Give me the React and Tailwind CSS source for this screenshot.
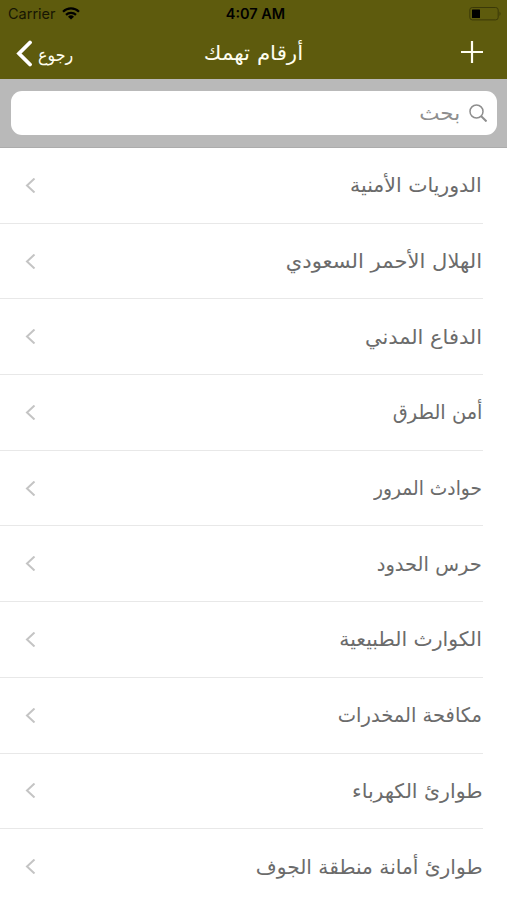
import React from 'react';

const contacts = [
  { name: 'الدوريات الأمنية', fit: 'scale-x-[1.023]' },
  { name: 'الهلال الأحمر السعودي', fit: 'scale-x-[1.055]' },
  { name: 'الدفاع المدني', fit: 'scale-x-[1.045]' },
  { name: 'أمن الطرق', fit: 'scale-x-[0.97]' },
  { name: 'حوادث المرور', fit: 'scale-x-[0.93]' },
  { name: 'حرس الحدود', fit: 'scale-x-[0.975]' },
  { name: 'الكوارث الطبيعية', fit: 'scale-x-[1.02]' },
  { name: 'مكافحة المخدرات', fit: 'scale-x-[0.975]' },
  { name: 'طوارئ الكهرباء', fit: 'scale-x-[1.023]' },
  { name: 'طوارئ أمانة منطقة الجوف', fit: 'scale-x-[1.01]' },
];

const StatusBar = () => (
  <div className="h-[27px] flex items-center justify-between px-2 text-[14.5px] text-black font-['Inter',sans-serif]">
    <div className="flex items-center gap-1.5 w-24 text-[#171603]">
      <span>Carrier</span>
      <svg width="18" height="13" viewBox="0 0 18 13" fill="none" stroke="black" strokeWidth="2.2">
        <path d="M1 4.7a11.5 11.5 0 0 1 16 0" />
        <path d="M4 7.9a7.2 7.2 0 0 1 10 0" />
        <path d="M9 12.5 6 9.7a4.3 4.3 0 0 1 6 0z" fill="black" stroke="none" />
      </svg>
    </div>
    <span className="font-semibold">4:07 AM</span>
    <div className="flex items-center justify-end w-24 -mr-1">
      <svg width="34" height="14" viewBox="0 0 34 14" fill="none">
        <rect x="0.8" y="0.5" width="28.4" height="12.4" rx="2.5" stroke="#3b3908" />
        <rect x="3" y="2.5" width="8" height="8.5" rx="0.5" fill="currentColor" />
        <path d="M30.5 4.5a3 3 0 0 1 0 4.500z" fill="#3b3908" />
      </svg>
    </div>
  </div>
);

const App = () => (
  <div dir="ltr" className="w-[507px] h-[900px] overflow-hidden bg-white font-['DejaVu_Sans',sans-serif]">
    <div className="h-[79px] bg-[#5e5b0d]">
      <StatusBar />
      <div className="h-[52px] grid grid-cols-3 items-center text-[#fffef0] text-xl">
        <div className="flex items-center gap-1.5 pl-4">
          <svg width="16" height="27" viewBox="0 0 16 27" fill="none" stroke="white" strokeWidth="3.8" strokeLinecap="round">
            <path d="M14 2.500 3 13.500 14 24.500" />
          </svg>
          <span dir="rtl" className="pt-1 text-[18px] origin-left scale-x-[0.88]">رجوع</span>
        </div>
        <span dir="rtl" className="text-center scale-x-[1.07]">أرقام تهمك</span>
        <div className="flex justify-end pr-6 -mt-0.5">
          <svg width="22" height="22" viewBox="0 0 22 22" stroke="currentColor" strokeWidth="2.2">
            <path d="M11 0v22M0 11h22" />
          </svg>
        </div>
      </div>
    </div>

    <div className="h-[69px] bg-[#b9b9b9] border-b border-[#acacac] pt-3 pl-[11px] pr-2.5">
      <div dir="rtl" className="h-11 bg-white rounded-[11px] flex items-center gap-[9px] px-2.5 text-xl text-[#8e8e8e]">
        <svg width="18" height="18" viewBox="0 0 18 18" fill="none" stroke="currentColor" strokeWidth="1.5">
          <circle cx="7.5" cy="7.5" r="6.5" />
          <path d="m12 12 5.5 5.5" strokeWidth="2" />
        </svg>
        <span className="origin-right scale-x-[1.07]">بحث</span>
      </div>
    </div>

    {contacts.map(({ name, fit }) => (
      <div key={name} className="h-[75.7px] mr-6 pl-[25px] pr-px flex items-center justify-between border-b border-[#e8e8e8] text-xl text-[#6b6b6b]">
        <svg width="11" height="15" viewBox="0 0 11 15" fill="none" stroke="#c4c4c4" strokeWidth="2">
          <path d="M9.5 .5 2 7.5l7.5 7" />
        </svg>
        <span dir="rtl" className={`origin-right ${fit}`}>{name}</span>
      </div>
    ))}
  </div>
);

export default App;
